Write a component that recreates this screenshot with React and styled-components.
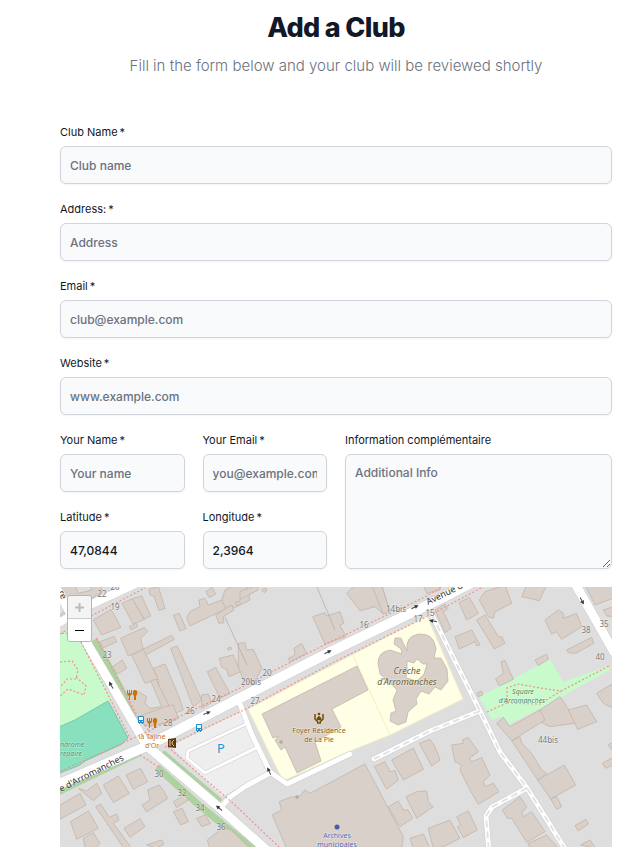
import React from "react";
import styled, { createGlobalStyle } from "styled-components";

// Buildings are traced per tile, at three units for one map pixel
const tiles = [
  {
    x: 50,
    y: 580,
    buildings: [
      "130,120 183,88 213,142 155,165",
      "216,70 247,56 283,118 250,133",
      "247,56 275,48 302,108 283,118",
      "238,140 258,130 263,140 243,150",
      "297,28 325,20 345,85 327,92 312,48 300,45",
      "150,185 193,169 200,185 160,203",
      "370,105 388,100 408,145 390,153",
      "410,115 420,95 450,80 447,60 465,55 475,75 515,60 530,85 420,138",
      "468,35 487,22 497,42 478,53",
      "515,60 525,30 555,15 590,15 600,60 560,80 530,90",
      "497,105 545,75 552,90 520,110 522,128 507,130",
      "212,175 283,142 293,155 272,175 280,208 235,228",
      "278,208 365,166 373,178 287,225",
      "245,225 280,208 325,298 285,310",
      "362,205 382,198 455,360 430,382",
      "188,260 217,240 230,265 203,282",
      "508,235 550,225 572,275 537,290 530,268 515,262",
      "472,275 497,262 540,340 510,355",
      "310,265 345,252 385,345 400,390 350,410 330,350 325,300",
      "230,350 265,335 290,350 285,370 300,385 335,380 302,302 318,298 378,420 300,440 265,425",
      "455,345 475,342 485,368 455,385",
      "30,15 75,15 85,40 125,30 120,15 150,15 158,35 110,65 85,65 60,75",
      "30,105 42,95 48,115 30,125",
      "532,205 542,201 545,207 535,211",
      "556,68 568,63 572,72 560,77",
    ],
  },
  {
    x: 50,
    y: 710,
    buildings: [
      "265,20 345,-10 370,-15 385,25 320,45 285,45",
      "160,225 205,198 238,250 190,278",
      "228,195 272,175 293,215 250,238",
      "85,235 110,243 140,220 155,250 130,272",
      "30,285 90,250 108,285 30,328",
      "62,335 115,303 145,355 80,388",
      "100,385 130,368 150,400 135,415 105,415",
      "137,290 152,282 178,322 200,312 207,330 190,340 245,415 222,415",
      "222,355 270,326 285,350 240,382",
      "293,240 328,225 342,245 353,265 290,306 276,285 300,270",
      "370,275 405,255 415,270 380,293",
      "370,305 397,295 415,335 392,345",
      "440,325 465,315 482,340 455,350",
      "472,390 520,352 545,362 600,415 480,415",
      "290,405 335,390 342,402 320,415",
    ],
  },
  {
    x: 240,
    y: 580,
    buildings: [
      "0,35 50,15 55,30 0,58",
      "65,30 75,24 82,30 72,38",
      "320,40 345,15 425,15 450,95 430,102 405,80 360,92",
      "395,15 425,15 450,95 430,102",
      "218,110 255,98 260,108 300,95 312,130 300,135 318,170 255,192",
      "145,235 165,225 162,205 185,190 200,220 150,245",
      "-5,190 15,188 20,210 40,208 66,265 40,310 10,300 -5,260",
      "550,15 600,15 600,30 560,40",
    ],
  },
  {
    x: 240,
    y: 710,
    buildings: [
      "97,315 125,300 118,275 150,262 180,258 195,240 210,250 375,162 490,380 485,415 140,415",
      "403,170 435,155 450,185 465,182 475,210 440,238",
      "455,150 520,114 550,178 490,210",
      "538,100 570,88 582,105 595,135 600,150 575,168",
      "445,290 475,273 490,300 505,300 518,325 480,350",
      "498,260 530,245 560,243 565,275 580,290 530,325",
      "510,385 550,372 570,415 520,415",
    ],
  },
  {
    x: 430,
    y: 580,
    buildings: [
      "15,90 45,72 55,85 40,95 63,145 45,158",
      "87,68 118,52 145,100 110,120",
      "148,60 165,35 225,15 245,70 195,95 190,115 175,110",
      "140,120 165,105 205,170 215,170 225,190 193,207",
      "75,170 125,150 150,195 140,197 135,185 88,207",
      "275,50 290,15 350,15 328,62",
      "345,120 385,90 400,100 400,115 440,100 455,140 395,178 380,155 365,162",
      "410,210 485,172 492,190 437,220 415,218",
      "197,297 220,280 213,245 225,242 250,298 208,318",
      "315,240 350,223 355,238 325,257",
      "140,340 155,333 158,345 145,350",
      "465,15 550,15 550,55 495,75",
      "520,90 550,80 550,110 530,108",
      "500,340 550,310 550,385 520,370",
      "300,410 390,350 430,410 435,430 360,440",
      "415,390 470,375 500,425 443,448",
    ],
  },
  {
    x: 430,
    y: 710,
    buildings: [
      "65,105 100,100 98,88 115,83 145,125 118,145 125,155 155,143 180,195 160,215 165,230 190,220 207,245 145,283 120,240 90,180 95,165 75,155",
      "-5,355 60,330 90,385 30,415 10,415",
      "80,320 115,303 142,360 100,383 82,350 92,345",
      "217,300 270,260 290,290 275,310 280,320 305,305 345,365 290,397 245,325 232,325",
      "295,400 350,375 385,415 300,415",
      "323,210 403,165 437,225 362,267",
      "362,267 380,260 395,290 380,298",
      "245,92 270,80 275,100 305,130 335,180 350,190 323,210",
      "200,40 220,22 240,50 330,0 345,30 245,92",
      "435,347 468,328 475,342 445,363",
      "452,405 480,390 497,415",
      "517,160 550,142 550,165 527,175",
      "535,105 550,95 550,125",
    ],
  },
];

// Roads, from the widest to the narrowest
const roads = [
  { d: "M50 788 L147 746 L240 698 L330 652 L440 599 L475 581", width: 10 },
  { d: "M50 580 L60 594 L85 640 L111 684 L147 746 L215 804 L272 855", width: 9 },
  { d: "M55 625 L92 604 L140 582", width: 8 },
  { d: "M573 580 L614 652", width: 9 },
  { d: "M240 704 L252 735 L270 772 L287 784 L350 754", width: 5 },
  { d: "M222 806 L230 797 L246 786 L270 773", width: 5 },
  { d: "M246 724 L188 751 L187 758 L205 773 L258 747", width: 3 },
];

const lanes = [
  "M432 615 L480 711 L500 752 L527 788 L567 852",
  "M480 711 L430 731 L374 759",
  "M527 788 L492 807 L486 816 L489 852",
];

const footways = [
  "M50 776 L138 736 L240 688 L330 642 L425 597 L445 585",
  "M165 747 L246 709 L332 663 L430 615 L500 578",
  "M58 633 L77 634 L131 740",
  "M96 638 L138 717 L150 732 M60 634 L85 619 L145 588",
  "M140 755 L160 768 M168 747 L235 805 L280 848",
  "M60 662 L72 661 L78 670 L76 679 L67 679 L58 690 M76 677 L86 686 L84 695 L68 689 L56 700",
  "M487 712 L507 703 L507 688 L518 684 L540 688 L561 691 L609 666 M507 703 L540 704 L561 691",
];

const hedges = [
  { d: "M94 640 L108 666 L135 717", width: 8 },
  { d: "M58 793 L139 754", width: 5 },
  { d: "M162 753 L220 802", width: 7 },
  { d: "M157 767 L200 806 L258 853", width: 7 },
];

const oneWays = [
  { x: 111, y: 685, angle: 240 },
  { x: 207, y: 713, angle: -22 },
  { x: 328, y: 652, angle: -25 },
  { x: 415, y: 607, angle: -25 },
  { x: 433, y: 621, angle: 190 },
  { x: 269, y: 771, angle: 245 },
  { x: 219, y: 808, angle: 220 },
  { x: 582, y: 601, angle: 63 },
];

const houseNumbers = [
  ["22", 102, 597],
  ["20", 115, 590],
  ["19", 115, 610],
  ["23", 107, 658],
  ["24", 216, 702],
  ["26", 190, 714],
  ["28", 168, 726],
  ["20", 267, 676],
  ["20bis", 251, 685],
  ["27", 255, 704],
  ["16", 364, 628],
  ["14bis", 396, 612],
  ["17", 418, 622],
  ["15", 430, 616],
  ["30", 159, 777],
  ["32", 182, 796],
  ["34", 200, 811],
  ["36", 221, 830],
  ["38", 586, 633],
  ["35", 604, 627],
  ["40", 600, 660],
  ["44bis", 548, 743],
];

const ClubMap = () => {
  return (
    <MapDrawing
      viewBox="60 587 552 260"
      preserveAspectRatio="xMidYMid slice"
      role="img"
      aria-label="Map"
    >
      <rect x="0" y="500" width="700" height="450" fill="#dedede" />

      {/* parks, school grounds and parking */}
      <path d="M50 634 L76 631 L112 700 L50 740Z" fill="#c8facc" />
      <path
        d="M50 731 L75 720 L108 701 L113 710 L128 738 L122 744 L85 761 L80 765 L50 777Z"
        fill="#88e0be"
        stroke="#72c9a8"
      />
      <path
        d="M479 697 L550 659 L563 682 L608 666 L610 670 L545 706 L508 725 L500 717 L492 720Z"
        fill="#c8facc"
      />
      <path
        d="M248 709 L427 616 L463 699 L390 735 L350 751 L283 781Z"
        fill="#ffffe5"
        stroke="#f1edcc"
      />
      <path d="M353 655 L390 735" fill="none" stroke="#f6efbf" />
      <path
        d="M170 746 L243 710 L272 770 L222 797Z"
        fill="#eeeeee"
        stroke="#dcdcdc"
      />

      {hedges.map((hedge) => (
        <path
          key={hedge.d}
          d={hedge.d}
          fill="none"
          stroke="#aed1a0"
          strokeWidth={hedge.width}
        />
      ))}

      {tiles.map((tile) => (
        <g
          key={`${tile.x}-${tile.y}`}
          transform={`translate(${tile.x} ${tile.y}) scale(0.3333)`}
          fill="#d9d0c9"
          stroke="#c4b6ab"
          strokeWidth="2.5"
        >
          {tile.buildings.map((points) => (
            <polygon key={points} points={points} />
          ))}
        </g>
      ))}
      <g fill="#d9d0c9" stroke="#c4b6ab" strokeWidth="0.8">
        <path d="M262 714 L357 666 L368 690 L332 709 L341 727 L315 742 L321 761 L297 773 L285 747 L281 750 L275 740 L279 736 L273 738Z" />
        <path
          fillRule="evenodd"
          d="M378 663 Q378 652 390 650 L402 654 L401 649 L394 644 L395 638 L401 638 L407 651 Q405 636 419 634 Q434 633 436 649 L434 658 L441 658 L447 669 L448 681 L441 690 L435 687 L429 694 L421 691 L416 699 L417 704 L408 712 L406 722 L398 725 L390 721 L391 713 L396 711 L393 700 L397 690 L388 681 L380 674Z M407 670 L407 661 L414 663 L417 659 L423 664 L427 664 L424 674 L417 681 L406 678Z"
        />
      </g>
      <path d="M317 587 L335 630 M225 617 L247 665" stroke="#aaaaaa" strokeWidth="0.7" />

      <g fill="none" strokeLinejoin="round" strokeLinecap="round">
        {roads.map((road) => (
          <path
            key={road.d}
            d={road.d}
            stroke="#cccccc"
            strokeWidth={road.width + 1}
          />
        ))}
        {lanes.map((d) => (
          <path key={d} d={d} stroke="#cccccc" strokeWidth="6" />
        ))}
        {roads.map((road) => (
          <path
            key={road.d}
            d={road.d}
            stroke="#ffffff"
            strokeWidth={road.width}
          />
        ))}
        {lanes.map((d) => (
          <path key={d} d={d} stroke="#ffffff" strokeWidth="5" />
        ))}
      </g>
      <g fill="none" stroke="#e3e3e3" strokeWidth="2" strokeDasharray="7 4">
        {lanes.map((d) => (
          <path key={d} d={d} />
        ))}
      </g>
      <g fill="none" stroke="#f4918b" strokeWidth="1.2" strokeDasharray="2 2">
        {footways.map((d) => (
          <path key={d} d={d} />
        ))}
      </g>

      {oneWays.map(({ x, y, angle }) => (
        <g key={`${x}-${y}`} transform={`translate(${x} ${y}) rotate(${angle})`}>
          <path d="M-4 0 H1" stroke="#444444" strokeWidth="1" />
          <path d="M0 -2 L4 0 L0 2Z" fill="#333333" />
        </g>
      ))}

      <MapText $size={8} $color="#777777">
        {houseNumbers.map(([label, x, y]) => (
          <text key={`${label}-${x}`} x={x} y={y}>
            {label}
          </text>
        ))}
      </MapText>

      <MapText $size={9} $color="#333333" $start>
        <text transform="translate(61 792) rotate(-27)">e d'Arromanches</text>
        <text transform="translate(428 605) rotate(-26)">Avenue d'A</text>
        <text transform="translate(58 592) rotate(65)">re</text>
      </MapText>
      <MapText $size={9} $color="#6a5d2d" $italic>
        <text x="407" y="674">Crèche</text>
        <text x="407" y="685">d'Arromanches</text>
      </MapText>
      <MapText $size={7} $color="#4d8a58" $italic>
        <text x="523" y="694">Square</text>
        <text x="522" y="703">d'Arromanches</text>
      </MapText>
      <MapText $size={7} $color="#3f8f75" $italic $start>
        <text x="60" y="747">ndrome</text>
        <text x="60" y="756">repaire</text>
      </MapText>
      <MapText $size={7} $color="#c77400">
        <text x="152" y="739">la Tajine</text>
        <text x="152" y="748">d'Or</text>
      </MapText>
      <MapText $size={7} $color="#8b5e20">
        <text x="319" y="733">Foyer Résidence</text>
        <text x="319" y="742">de La Pie</text>
      </MapText>
      <MapText $size={7} $color="#4c68b0">
        <text x="337" y="838">Archives</text>
        <text x="337" y="847">municipales</text>
      </MapText>
      <MapText $size={13} $color="#1e90d2">
        <text x="221" y="753">P</text>
      </MapText>
      <circle cx="337" cy="827" r="2.5" fill="#4460ad" />
      <circle cx="281" cy="742" r="1.8" fill="#b8a89c" />
      <circle cx="297" cy="797" r="1.8" fill="#b8a89c" />

      <Restaurant x={132} y={695} />
      <Restaurant x={152} y={723} />
      <BusStop x={141} y={720} />
      <BusStop x={199} y={728} />

      {/* theatre */}
      <g transform="translate(172 743)">
        <path d="M-4 -4 L4 -5 L4 5 L-4 4Z" fill="#5c3a10" />
        <path d="M2 -3 Q-2 0 2 3 M-2 -3 V3" stroke="#e6cfa8" fill="none" />
      </g>
      {/* residence: hands around a person */}
      <g transform="translate(319 718)" stroke="#734a08" fill="none">
        <path d="M-4 -4 V1 L-1 4 M4 -4 V1 L1 4 M-2 5 H2" strokeWidth="1.5" />
        <path d="M-2 0 L0 -2 L2 0 V2 H-2Z" fill="#734a08" strokeWidth="0.5" />
        <circle cx="0" cy="-4" r="1.3" fill="#734a08" stroke="none" />
      </g>
    </MapDrawing>
  );
};

const Restaurant = ({ x, y }) => (
  <g transform={`translate(${x} ${y})`} fill="#c77400">
    <path d="M-5 -5 H-4 V-2 H-3 V-5 H-2 V-2 H-1 V-5 H0 V-1 L-2 1 V5 H-3 V1 L-5 -1Z" />
    <path d="M3 -5 Q6 -5 5 -1 Q5 0 4 1 V5 H2 V1 Q1 0 1 -1 Q0 -5 3 -5Z" />
  </g>
);

const BusStop = ({ x, y }) => (
  <g transform={`translate(${x} ${y})`}>
    <path
      d="M-2 -4 H2 Q3 -4 3 -3 V3 H2 V4 H1 V3 H-1 V4 H-2 V3 H-3 V-3 Q-3 -4 -2 -4Z"
      fill="#1e90d2"
    />
    <path d="M-2 -3 H2 V0 H-2Z M-2 1 H-1 V2 H-2Z M1 1 H2 V2 H1Z" fill="#ffffff" />
  </g>
);

const FormField = ({ id, label, required, ...inputProps }) => (
  <Field>
    <Label htmlFor={id}>
      {label}
      {required && <Star>*</Star>}
    </Label>
    <Input id={id} name={id} required={required} {...inputProps} />
  </Field>
);

const App = () => {
  return (
    <>
      <GlobalStyle />
      <Page>
        <Header>
          <Title>Add a Club</Title>
          <SubTitle>
            Fill in the form below and your club will be reviewed shortly
          </SubTitle>
        </Header>
        <Form onSubmit={(e) => e.preventDefault()}>
          <FormField id="clubName" label="Club Name" placeholder="Club name" required />
          <FormField id="address" label="Address:" placeholder="Address" required />
          <FormField
            id="email"
            type="email"
            label="Email"
            placeholder="club@example.com"
            required
          />
          <FormField
            id="website"
            label="Website"
            placeholder="www.example.com"
            required
          />
          <DetailsGrid>
            <FormField id="yourName" label="Your Name" placeholder="Your name" required />
            <FormField
              id="yourEmail"
              type="email"
              label="Your Email"
              placeholder="you@example.com"
              required
            />
            <InfoField>
              <Label htmlFor="info">Information complémentaire</Label>
              <TextArea id="info" name="info" placeholder="Additional Info" />
            </InfoField>
            <FormField id="latitude" label="Latitude" defaultValue="47,0844" required />
            <FormField id="longitude" label="Longitude" defaultValue="2,3964" required />
          </DetailsGrid>
          <MapBox>
            <ClubMap />
            <ZoomControl>
              <ZoomButton type="button" aria-label="Zoom in" disabled>
                <svg width="11" height="11" viewBox="0 0 11 11">
                  <path d="M1 5.5 H10 M5.5 1 V10" stroke="currentColor" strokeWidth="2" />
                </svg>
              </ZoomButton>
              <ZoomButton type="button" aria-label="Zoom out">
                <svg width="11" height="11" viewBox="0 0 11 11">
                  <path d="M1 5.5 H10" stroke="currentColor" strokeWidth="1" />
                </svg>
              </ZoomButton>
            </ZoomControl>
          </MapBox>
        </Form>
      </Page>
    </>
  );
};

// Styled Components
const GlobalStyle = createGlobalStyle`
  * {
    box-sizing: border-box;
  }

  body {
    margin: 0;
    background: #fff;
    color: #111827;
    font-family: Inter, "Liberation Sans", sans-serif;
  }
`;

const Page = styled.main`
  padding: 12px 20px 0 60px;
`;

const Header = styled.header`
  margin-bottom: 47px;
  text-align: center;
`;

const Title = styled.h1`
  margin: 0 0 10px;
  font-size: 27px;
  line-height: 32px;
  font-weight: 800;
  letter-spacing: -0.025em;
`;

const SubTitle = styled.p`
  margin: 0;
  color: #6b7280;
  font-size: 15px;
  line-height: 24px;
  font-weight: 300;
`;

const Form = styled.form`
  display: flex;
  flex-direction: column;
  gap: 18px;
`;

const Field = styled.div`
  display: flex;
  flex-direction: column;
  gap: 6px;
  min-width: 0;
`;

const InfoField = styled(Field)`
  grid-column: 3 / span 2;
  grid-row: 1 / span 2;
`;

const DetailsGrid = styled.div`
  display: grid;
  grid-template-columns: repeat(4, minmax(0, 1fr));
  gap: 18px;
`;

const Label = styled.label`
  font-size: 11px;
  line-height: 15px;
  font-weight: 400;
`;

const Star = styled.span`
  margin-left: 2px;
`;

const Input = styled.input`
  width: 100%;
  height: 38px;
  padding: 0 9px;
  border: 1px solid #d1d5db;
  border-radius: 6px;
  background: #f9fafb;
  box-shadow: 0 1px 2px rgba(0, 0, 0, 0.05);
  color: #111827;
  font-family: inherit;
  font-size: 12px;
  line-height: 18px;
  font-weight: 500;

  &::placeholder {
    color: #6b7280;
    opacity: 1;
  }
`;

const TextArea = styled(Input).attrs({ as: "textarea" })`
  flex: 1;
  height: auto;
  padding: 9px;
  resize: both;
`;

const MapBox = styled.div`
  position: relative;
  height: 260px;
  overflow: hidden;
  background: #dedede;
`;

const MapDrawing = styled.svg`
  display: block;
  width: 100%;
  height: 100%;
`;

const MapText = styled.g`
  fill: ${(props) => props.$color};
  font-family: "Noto Sans", sans-serif;
  font-size: ${(props) => props.$size}px;
  font-style: ${(props) => (props.$italic ? "italic" : "normal")};
  text-anchor: ${(props) => (props.$start ? "start" : "middle")};
  paint-order: stroke;
  stroke: rgba(255, 255, 255, 0.5);
  stroke-width: 1px;
`;

const ZoomControl = styled.div`
  position: absolute;
  top: 8px;
  left: 7px;
  display: flex;
  flex-direction: column;
  border: 1px solid #b5b5b5;
  border-radius: 3px;
  overflow: hidden;
`;

const ZoomButton = styled.button`
  display: flex;
  align-items: center;
  justify-content: center;
  width: 23px;
  height: 22px;
  padding: 0;
  border: 0;
  background: #fff;
  color: #000;

  & + & {
    height: 23px;
    border-top: 1px solid #ccc;
  }

  &:disabled {
    background: #f4f4f4;
    color: #bbb;
  }
`;

export default App;
